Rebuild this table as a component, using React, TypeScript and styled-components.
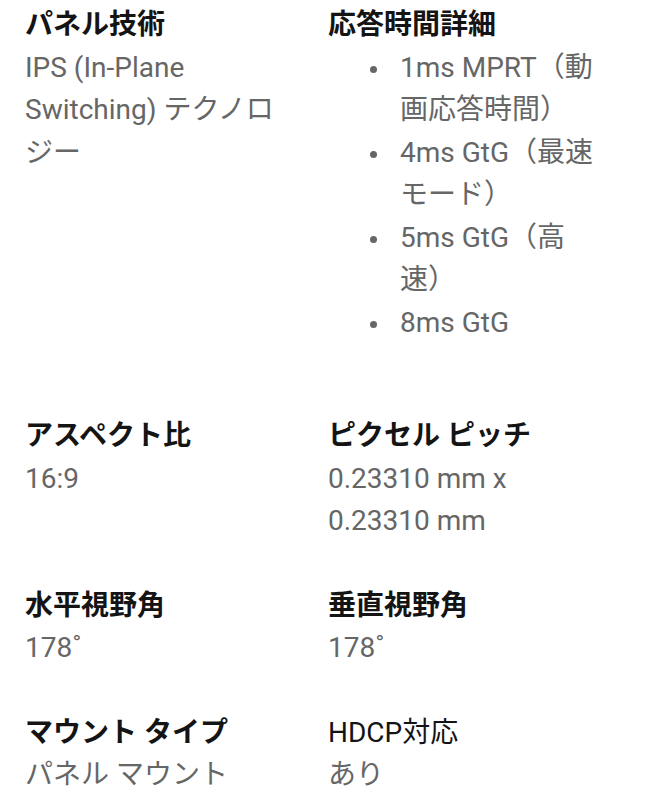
import styled, { createGlobalStyle } from 'styled-components';

const GlobalStyle = createGlobalStyle`
  body {
    margin: 0;
    background: #ffffff;
  }
`;

type Spec = {
  title: string;
  values?: string[];
  list?: string[];
  plain?: boolean;
};

const specs: Spec[] = [
  { title: 'パネル技術', values: ['IPS (In-Plane Switching) テクノロジー'] },
  {
    title: '応答時間詳細',
    list: ['1ms MPRT（動画応答時間）', '4ms GtG（最速モード）', '5ms GtG（高速）', '8ms GtG'],
  },
  { title: 'アスペクト比', values: ['16:9'] },
  { title: 'ピクセル ピッチ', values: ['0.23310 mm x 0.23310 mm'] },
  { title: '水平視野角', values: ['178˚'] },
  { title: '垂直視野角', values: ['178˚'] },
  { title: 'マウント タイプ', values: ['パネル マウント'] },
  { title: 'HDCP対応', values: ['あり'], plain: true },
];

export default function App() {
  return (
    <>
      <GlobalStyle />
      <SpecGrid>
        {specs.map((spec) => (
          <SpecItem key={spec.title}>
            <SpecTitle $plain={spec.plain}>{spec.title}</SpecTitle>
            {spec.values?.map((v) => (
              <SpecValue key={v}>{v}</SpecValue>
            ))}
            {spec.list && (
              <BulletList>
                {spec.list.map((v) => (
                  <BulletItem key={v}>{v}</BulletItem>
                ))}
              </BulletList>
            )}
          </SpecItem>
        ))}
      </SpecGrid>
    </>
  );
}

const SpecGrid = styled.div`
  display: grid;
  grid-template-columns: 270px 270px;
  column-gap: 33px;
  row-gap: 42px;
  padding: 4px 0 0 25px;
  font-family: Roboto, 'Noto Sans CJK JP', sans-serif;
  font-size: 28px;
  line-height: 42.5px;
`;

const SpecItem = styled.div`
  display: flex;
  flex-direction: column;
  align-items: stretch;
`;

const SpecTitle = styled.div<{ $plain?: boolean }>`
  color: #141414;
  font-weight: ${(p) => (p.$plain ? 400 : 700)};
`;

const SpecValue = styled.div`
  color: #666666;
`;

const BulletList = styled.ul`
  margin: 0 0 29px;
  padding-left: 72px;
  list-style: none;
  color: #666666;
`;

const BulletItem = styled.li`
  position: relative;

  &::before {
    content: '';
    position: absolute;
    left: -30px;
    top: 19px;
    width: 7px;
    height: 7px;
    border-radius: 50%;
    background: #666666;
  }
`;
